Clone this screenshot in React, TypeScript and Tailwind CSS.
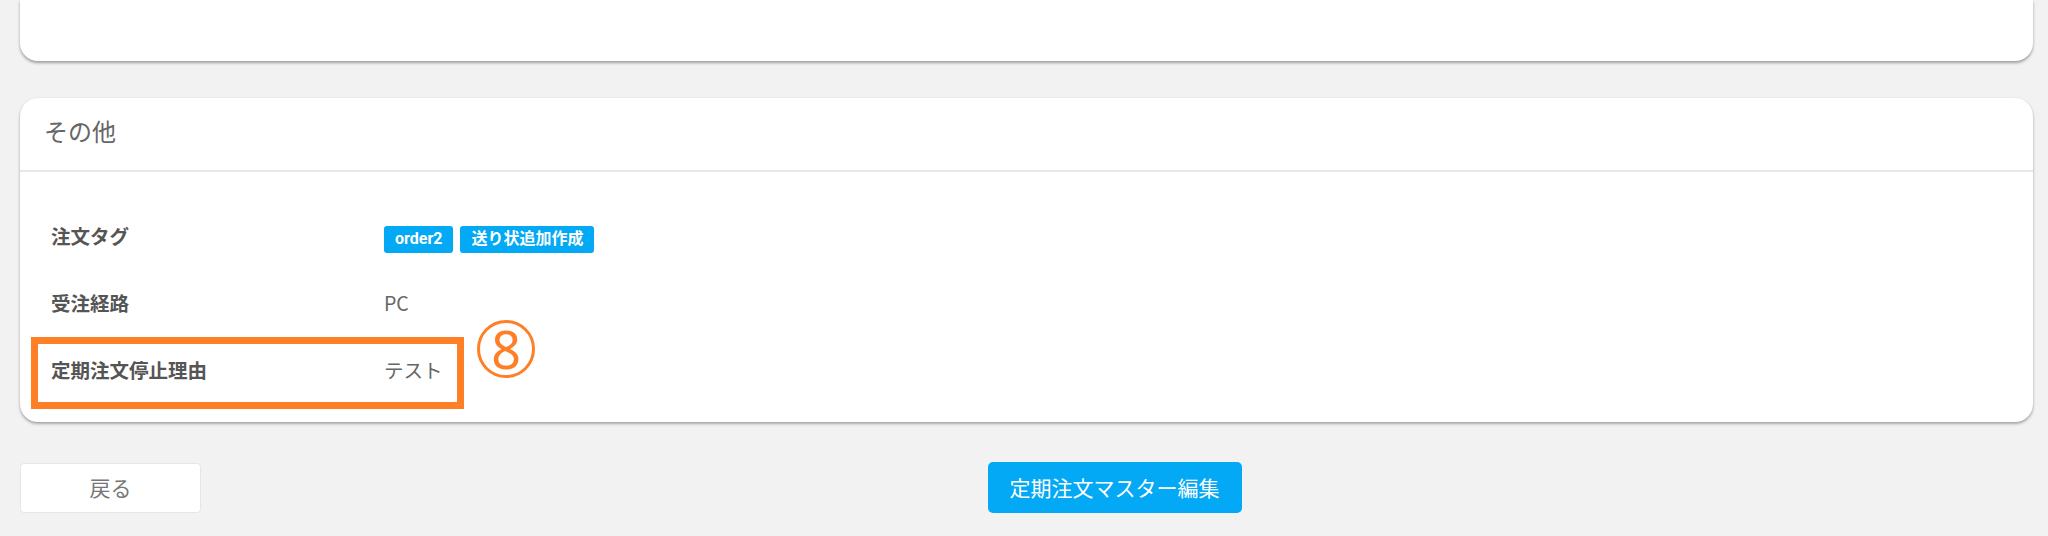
import React from "react";

const jp = "font-['Noto_Sans_CJK_JP','Noto_Sans',sans-serif]";

interface Row {
  label: string;
  value?: string;
  tags?: string[];
}

const rows: Row[] = [
  { label: "注文タグ", tags: ["order2", "送り状追加作成"] },
  { label: "受注経路", value: "PC" },
  { label: "定期注文停止理由", value: "テスト" },
];

export default function App() {
  return (
    <div className={`w-[2048px] h-[536px] bg-[#f2f2f2] px-[20px] ${jp} overflow-hidden`}>
      {/* previous card, only its bottom edge is visible */}
      <div className="w-[2013px] h-[61px] bg-white rounded-b-[18px] shadow-[0_2px_3px_rgba(0,0,0,0.35)]" />

      <div className="mt-[37px] w-[2013px] bg-white rounded-[18px] shadow-[0_2px_3px_rgba(0,0,0,0.3),0_0_2px_rgba(0,0,0,0.08)]">
        <div className="h-[74px] flex items-center pl-[24px] pb-[6px] text-[24px] text-[#666] border-b-2 border-[#e3e9ec]">
          その他
        </div>
        <div className="pt-[30px] pb-[19px] pl-[31px]">
          {rows.map((row, i) => (
            <div key={row.label} className="relative h-[67px] flex items-center">
              <span className="w-[333px] text-[19.5px] font-bold text-[#555]">{row.label}</span>
              {row.tags ? (
                <div className="flex gap-[7px] mt-[7px]">
                  {row.tags.map((t) => (
                    <span
                      key={t}
                      className="h-[27px] px-[11px] flex items-center rounded-[3px] bg-[#03a9f4] text-white text-[16px] font-bold font-['Roboto','Noto_Sans_CJK_JP',sans-serif]"
                    >
                      {t}
                    </span>
                  ))}
                </div>
              ) : (
                <span className="text-[19.5px] text-[#666]">{row.value}</span>
              )}
              {i === 2 && (
                <>
                  <div className="absolute left-[-20px] top-[1px] w-[433px] h-[72px] border-[7px] border-[#ff7f27]" />
                  <div className="absolute left-[426px] top-[-16px] w-[58px] h-[58px] rounded-full border-[3px] border-[#ff7f27] flex items-center justify-center text-[#ff7f27] text-[52px] leading-none font-['Noto_Sans',sans-serif]">
                    8
                  </div>
                </>
              )}
            </div>
          ))}
        </div>
      </div>

      <div className="mt-[40px] flex items-center">
        <button className="w-[181px] h-[50px] bg-white border border-[#e3e7ea] rounded-[4px] text-[21px] text-[#777]">
          戻る
        </button>
        <div className="flex-1 flex justify-center">
          <button className="w-[254px] h-[51px] bg-[#03a9f4] rounded-[5px] text-[21px] text-white">
            定期注文マスター編集
          </button>
        </div>
      </div>
    </div>
  );
}
